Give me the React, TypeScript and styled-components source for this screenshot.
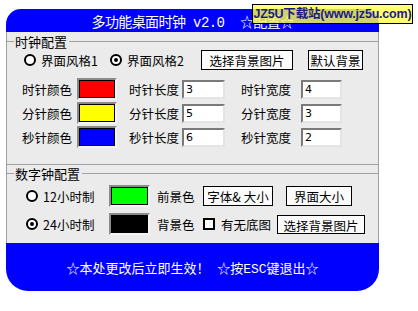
import React from "react";
import styled, { createGlobalStyle } from "styled-components";

const GlobalStyle = createGlobalStyle`
  body {
    margin: 0;
    background: #ffffff;
    font-family: "Noto Sans CJK SC", "DejaVu Sans", sans-serif;
    font-size: 12px;
    color: #000000;
  }
`;

const Page = styled.div`
  position: relative;
  width: 418px;
  height: 311px;
  padding: 9px 0 0 6px;
  box-sizing: border-box;
`;

const Watermark = styled.div`
  position: absolute;
  top: 4px;
  left: 252px;
  width: 161px;
  height: 20px;
  box-sizing: border-box;
  border: 1px solid #000000;
  background: rgba(255, 255, 80, 0.82);
  color: #1c1c80;
  font-family: "Liberation Sans", "Noto Sans CJK SC", sans-serif;
  font-weight: bold;
  font-size: 12.5px;
  line-height: 18px;
  white-space: nowrap;
  text-align: center;
  letter-spacing: -0.2px;
`;

const Window = styled.div`
  width: 373px;
`;

const TitleBar = styled.div`
  height: 23px;
  background: #0000ff;
  border-radius: 15px 15px 0 0;
  color: #ffffff;
  display: flex;
  align-items: center;
  justify-content: center;
  font-family: "Liberation Mono", "Noto Sans CJK SC", monospace;
  font-size: 14px;
  letter-spacing: -0.6px;
  white-space: pre;
`;

const Panel = styled.div`
  height: 211px;
  background: #ebebeb;
  border-left: 1px solid #a0a0a0;
  border-right: 1px solid #a0a0a0;
  box-sizing: border-box;
`;

const Group = styled.div<{ $top: number; $bottom: number; $line?: boolean }>`
  padding-top: ${({ $top }) => $top}px;
  padding-bottom: ${({ $bottom }) => $bottom}px;
  border-bottom: ${({ $line }) => ($line ? "1px solid #a0a0a0" : "none")};
`;

const GroupHead = styled.div`
  height: 16px;
  display: flex;
  align-items: center;
  font-size: 13px;

  &::before,
  &::after {
    content: "";
    border-top: 1px solid #a0a0a0;
  }
  &::before {
    width: 7px;
  }
  &::after {
    flex: 1;
  }
  span {
    padding: 0 2px 0 1px;
  }
`;

const StyleRow = styled.div`
  height: 20px;
  margin-top: 1px;
  display: flex;
  align-items: center;
  padding-left: 17px;
`;

const RadioItem = styled.label<{ $width: number }>`
  width: ${({ $width }) => $width}px;
  display: flex;
  align-items: center;
  gap: 5px;
  white-space: nowrap;
`;

const RadioDot = styled.span<{ $on?: boolean }>`
  width: 12px;
  height: 12px;
  box-sizing: border-box;
  border: 2px solid #000000;
  border-radius: 50%;
  background: #ffffff;
  display: flex;
  align-items: center;
  justify-content: center;
  flex-shrink: 0;

  &::after {
    content: "";
    width: 4px;
    height: 4px;
    border-radius: 50%;
    background: ${({ $on }) => ($on ? "#000000" : "transparent")};
  }
`;

const Button = styled.button<{ $width: number; $height?: number }>`
  width: ${({ $width }) => $width}px;
  height: ${({ $height }) => $height || 20}px;
  margin: 0;
  padding: 0;
  border: 1px solid #000000;
  background: #fbfbfb;
  font-family: "Noto Sans CJK SC", sans-serif;
  font-size: 12.5px;
  color: #000000;
  white-space: nowrap;
  flex-shrink: 0;
`;

const HandGrid = styled.div`
  margin-top: 7px;
  display: grid;
  grid-template-columns: 55px 52px 53px 59px 60px 42px;
  grid-auto-rows: 24px;
  align-items: center;
  padding-left: 15px;
`;

const Label = styled.span`
  font-size: 12.5px;
  white-space: nowrap;
`;

const Swatch = styled.span<{ $color: string; $w: number; $h: number }>`
  width: ${({ $w }) => $w}px;
  height: ${({ $h }) => $h}px;
  box-sizing: border-box;
  border: 2px solid;
  border-color: #8a8a8a #f4f4f4 #f4f4f4 #8a8a8a;
  box-shadow: inset 0 0 0 1px #000000;
  background: ${({ $color }) => $color};
  display: block;
`;

const NumInput = styled.input<{ $w: number }>`
  width: ${({ $w }) => $w}px;
  height: 19px;
  box-sizing: border-box;
  margin: 0;
  padding: 0 0 0 2px;
  border: 2px solid;
  border-color: #7a7a7a #e4e4e4 #e4e4e4 #7a7a7a;
  background: #ffffff;
  font-family: "DejaVu Sans", sans-serif;
  font-size: 11px;
  color: #000000;
  outline: none;
`;

const DigitalGrid = styled.div`
  margin-top: 2px;
  display: grid;
  grid-template-columns: 83px 48px 46px 1fr;
  grid-auto-rows: 26px;
  row-gap: 2px;
  align-items: center;
  padding-left: 19px;
`;

const Cluster = styled.div<{ $gap: number }>`
  display: flex;
  align-items: center;
  gap: ${({ $gap }) => $gap}px;
`;

const CheckBox = styled.span`
  width: 12px;
  height: 12px;
  box-sizing: border-box;
  border: 2px solid #000000;
  background: #ffffff;
  flex-shrink: 0;
`;

const Footer = styled.div`
  height: 48px;
  background: #0000ff;
  border-radius: 0 0 22px 22px;
  color: #ffffff;
  display: flex;
  align-items: center;
  justify-content: center;
  font-family: "Liberation Mono", "Noto Sans CJK SC", monospace;
  font-size: 13px;
  white-space: pre;
`;

const hands = [
  { name: "时针", color: "#ff0000", len: "3", width: "4" },
  { name: "分针", color: "#ffff00", len: "5", width: "3" },
  { name: "秒针", color: "#0000ff", len: "6", width: "2" },
];

export default function App() {
  return (
    <Page>
      <GlobalStyle />
      <Window>
        <TitleBar>多功能桌面时钟 v2.0  ☆配置☆</TitleBar>
        <Panel>
          <Group $top={1} $bottom={15} $line>
            <GroupHead>
              <span>时钟配置</span>
            </GroupHead>
            <StyleRow>
              <RadioItem $width={86}>
                <RadioDot />
                <Label>界面风格1</Label>
              </RadioItem>
              <RadioItem $width={91}>
                <RadioDot $on />
                <Label>界面风格2</Label>
              </RadioItem>
              <Button $width={92}>选择背景图片</Button>
              <Button $width={55} style={{ marginLeft: 15 }}>
                默认背景
              </Button>
            </StyleRow>
            <HandGrid>
              {hands.map((h) => (
                <React.Fragment key={h.name}>
                  <Label>{h.name}颜色</Label>
                  <Swatch $color={h.color} $w={40} $h={22} />
                  <Label>{h.name}长度</Label>
                  <NumInput $w={43} defaultValue={h.len} />
                  <Label>{h.name}宽度</Label>
                  <NumInput $w={41} defaultValue={h.width} />
                </React.Fragment>
              ))}
            </HandGrid>
          </Group>
          <Group $top={0} $bottom={0}>
            <GroupHead>
              <span>数字钟配置</span>
            </GroupHead>
            <DigitalGrid>
              <RadioItem $width={83}>
                <RadioDot />
                <Label>12小时制</Label>
              </RadioItem>
              <Swatch $color="#00ff00" $w={41} $h={22} />
              <Label>前景色</Label>
              <Cluster $gap={13}>
                <Button $width={70}>字体&amp; 大小</Button>
                <Button $width={66}>界面大小</Button>
              </Cluster>
              <RadioItem $width={83}>
                <RadioDot $on />
                <Label>24小时制</Label>
              </RadioItem>
              <Swatch $color="#000000" $w={41} $h={22} />
              <Label>背景色</Label>
              <Cluster $gap={6}>
                <CheckBox />
                <Label>有无底图</Label>
                <Button $width={88} $height={19}>
                  选择背景图片
                </Button>
              </Cluster>
            </DigitalGrid>
          </Group>
        </Panel>
        <Footer>☆本处更改后立即生效！ ☆按ESC键退出☆</Footer>
      </Window>
      <Watermark>JZ5U下载站(www.jz5u.com)</Watermark>
    </Page>
  );
}
